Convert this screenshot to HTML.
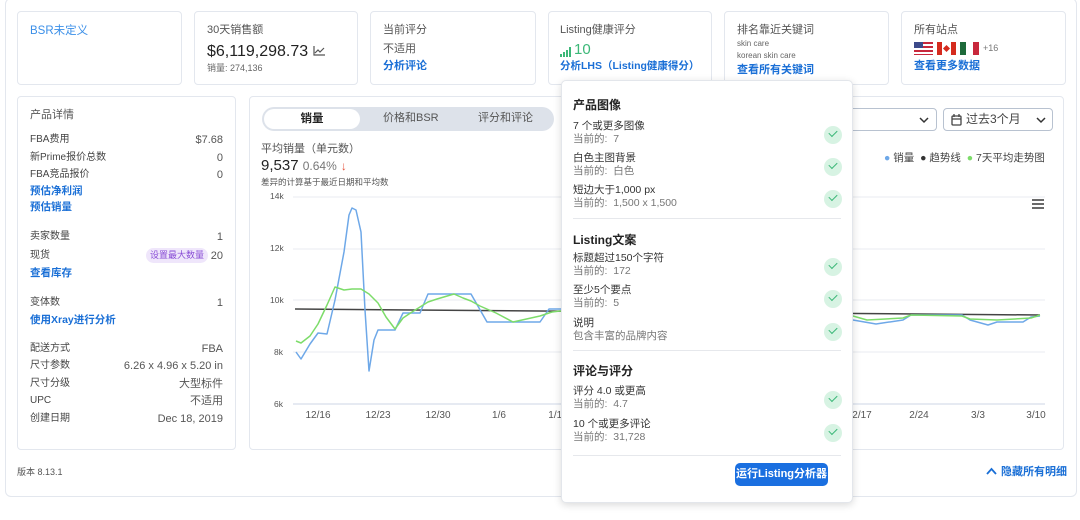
<!DOCTYPE html><html><head><meta charset="utf-8"><style>
*{box-sizing:border-box;margin:0;padding:0}
body{width:1080px;height:520px;background:#fff;font-family:"Liberation Sans","Noto Sans CJK SC",sans-serif;color:#333;position:relative;overflow:hidden;line-height:1.25}
.a{position:absolute;white-space:nowrap}
.card{position:absolute;border:1px solid #e3e7ee;border-radius:4px;background:#fff}
.lbl{font-size:11px;color:#555}
.link{color:#1a6fd6;font-weight:bold;font-size:11px}
.r{position:absolute;font-size:10px;color:#444;line-height:14px}
.v{position:absolute;right:12px;font-size:11px;color:#555;text-align:right;line-height:14px}
.ok{position:absolute;left:262px;width:18px;height:18px;border-radius:50%;background:#d7f3e3}
.ok:after{content:"";position:absolute;left:5px;top:4px;width:7px;height:4px;border-left:1.5px solid #3cb878;border-bottom:1.5px solid #3cb878;transform:rotate(-45deg)}
.ph{position:absolute;left:11px;font-size:12px;font-weight:bold;color:#222;line-height:15px}
.pi{position:absolute;left:11px;font-size:10.5px;color:#333;line-height:13px}
.pi span{color:#777;display:block}
.hr{position:absolute;left:11px;width:268px;height:1px;background:#e6e8ec}
</style></head><body>
<div class="card" style="left:5px;top:-2px;width:1072px;height:499px;border-radius:6px"></div>

<div class="card" style="left:17px;top:11px;width:165px;height:74px"><div class="a" style="left:12px;top:12px;font-size:11.5px;color:#3b8fe8">BSR未定义</div></div>
<div class="card" style="left:194px;top:11px;width:164px;height:74px">
<div class="a lbl" style="left:12px;top:12px">30天销售额</div>
<div class="a" style="left:12px;top:30px;font-size:16px;color:#222">$6,119,298.73</div>
<svg class="a" style="left:118px;top:34px" width="12" height="10"><path d="M1 0V9H12M2 7L5 4 7 6 11 2" stroke="#555" fill="none" stroke-width="1.2"/></svg>
<div class="a" style="left:12px;top:51px;font-size:9px;color:#666">销量: 274,136</div></div>
<div class="card" style="left:370px;top:11px;width:166px;height:74px">
<div class="a lbl" style="left:12px;top:12px">当前评分</div>
<div class="a lbl" style="left:12px;top:31px">不适用</div>
<div class="a link" style="left:12px;top:48px">分析评论</div></div>
<div class="card" style="left:548px;top:11px;width:164px;height:74px">
<div class="a lbl" style="left:11px;top:12px">Listing健康评分</div>
<svg class="a" style="left:11px;top:35px" width="12" height="10"><g fill="#3cb878"><rect x="0" y="7" width="2" height="3"/><rect x="3" y="5" width="2" height="5"/><rect x="6" y="3" width="2" height="7"/><rect x="9" y="0" width="2" height="10"/></g></svg>
<div class="a" style="left:25px;top:29px;font-size:15px;color:#3cb878">10</div>
<div class="a link" style="left:11px;top:48px;font-size:10.5px">分析LHS（Listing健康得分）</div></div>
<div class="card" style="left:724px;top:11px;width:165px;height:74px">
<div class="a lbl" style="left:12px;top:12px">排名靠近关键词</div>
<div class="a" style="left:12px;top:27px;font-size:8px;color:#666;line-height:10px">skin care</div>
<div class="a" style="left:12px;top:39px;font-size:8px;color:#666;line-height:10px">korean skin care</div>
<div class="a link" style="left:12px;top:52px">查看所有关键词</div></div>
<div class="card" style="left:901px;top:11px;width:165px;height:74px">
<div class="a lbl" style="left:12px;top:12px">所有站点</div>
<div class="a" style="left:12px;top:30px;width:19px;height:13px;background:repeating-linear-gradient(#c8283c 0 2px,#fff 2px 4px)"><div style="width:9px;height:6px;background:#3c4a8a"></div></div>
<div class="a" style="left:35px;top:30px;width:19px;height:13px;background:linear-gradient(90deg,#d52b1e 5px,#fff 5px 14px,#d52b1e 14px)"><div style="position:absolute;left:7px;top:4px;width:5px;height:5px;background:#d52b1e;transform:rotate(45deg)"></div></div>
<div class="a" style="left:58px;top:30px;width:19px;height:13px;background:linear-gradient(90deg,#1e6a3a 6px,#fff 6px 13px,#c8283c 13px)"></div>
<div class="a" style="left:81px;top:31px;font-size:9px;color:#777">+16</div>
<div class="a link" style="left:12px;top:48px">查看更多数据</div></div>

<div class="card" style="left:17px;top:96px;width:219px;height:354px">
<div class="a" style="left:12px;top:12px;font-size:11px;color:#555">产品详情</div>
<div class="r" style="left:12px;top:36px">FBA费用</div><div class="v" style="top:36px">$7.68</div>
<div class="r" style="left:12px;top:54px">新Prime报价总数</div><div class="v" style="top:54px">0</div>
<div class="r" style="left:12px;top:71px">FBA竞品报价</div><div class="v" style="top:71px">0</div>
<div class="a link" style="left:12px;top:88px;font-size:10.5px">预估净利润</div>
<div class="a link" style="left:12px;top:104px;font-size:10.5px">预估销量</div>
<div class="r" style="left:12px;top:133px">卖家数量</div><div class="v" style="top:133px">1</div>
<div class="r" style="left:12px;top:152px">现货</div>
<div class="a" style="left:128px;top:151px;padding:0 4px;border-radius:8px;background:#efe6fb;color:#8a4fd6;font-size:9px;line-height:15px">设置最大数量</div><div class="v" style="top:152px">20</div>
<div class="a link" style="left:12px;top:170px;font-size:10.5px">查看库存</div>
<div class="r" style="left:12px;top:199px">变体数</div><div class="v" style="top:199px">1</div>
<div class="a link" style="left:12px;top:217px;font-size:10.5px">使用Xray进行分析</div>
<div class="r" style="left:12px;top:245px">配送方式</div><div class="v" style="top:245px">FBA</div>
<div class="r" style="left:12px;top:262px">尺寸参数</div><div class="v" style="top:262px">6.26 x 4.96 x 5.20 in</div>
<div class="r" style="left:12px;top:280px">尺寸分级</div><div class="v" style="top:280px">大型标件</div>
<div class="r" style="left:12px;top:297px">UPC</div><div class="v" style="top:297px">不适用</div>
<div class="r" style="left:12px;top:315px">创建日期</div><div class="v" style="top:315px">Dec 18, 2019</div>
</div>

<div class="card" style="left:249px;top:96px;width:815px;height:354px"></div>
<div class="a" style="left:262px;top:107px;width:292px;height:24px;border-radius:12px;background:#dde2ea"></div>
<div class="a" style="left:264px;top:109px;width:96px;height:20px;border-radius:10px;background:#fff;text-align:center;font-size:11.5px;font-weight:bold;line-height:20px;color:#222">销量</div>
<div class="a" style="left:383px;top:112px;font-size:11px;color:#555">价格和BSR</div>
<div class="a" style="left:478px;top:112px;font-size:11px;color:#555">评分和评论</div>
<div class="a" style="left:261px;top:143px;font-size:11px;color:#555">平均销量（单元数）</div>
<div class="a" style="left:261px;top:157px;font-size:15px;color:#222">9,537 <span style="font-size:12px;color:#777">0.64%</span> <span style="font-size:12px;color:#e5533c;font-weight:bold">↓</span></div>
<div class="a" style="left:261px;top:177px;font-size:8.5px;color:#555">差异的计算基于最近日期和平均数</div>

<div class="a" style="left:830px;top:108px;width:107px;height:23px;border:1px solid #b8c2d0;border-radius:4px"><svg class="a" style="left:88px;top:8px" width="10" height="7"><path d="M1 1L5 5 9 1" stroke="#333" fill="none" stroke-width="1.5"/></svg></div>
<div class="a" style="left:943px;top:108px;width:110px;height:23px;border:1px solid #b8c2d0;border-radius:4px">
<svg class="a" style="left:7px;top:5px" width="11" height="12"><rect x="1" y="2" width="9" height="9" rx="1" stroke="#444" fill="none" stroke-width="1.3"/><path d="M1 5H10M3 0V3M8 0V3" stroke="#444" stroke-width="1.3"/></svg>
<div class="a" style="left:22px;top:3px;font-size:12px;color:#444">过去3个月</div>
<svg class="a" style="left:92px;top:8px" width="10" height="7"><path d="M1 1L5 5 9 1" stroke="#333" fill="none" stroke-width="1.5"/></svg></div>
<div class="a" style="left:884px;top:152px;font-size:10.5px;color:#444"><span style="color:#6ea8e8">●</span> 销量 &nbsp;<span style="color:#333">●</span> 趋势线 &nbsp;<span style="color:#7ddc6a">●</span> 7天平均走势图</div>
<svg class="a" style="left:1032px;top:199px" width="12" height="10"><path d="M0 1H12M0 5H12M0 9H12" stroke="#555" stroke-width="1.8"/></svg>

<svg class="a" style="left:0;top:0" width="1080" height="520">
<g stroke="#e8ebf0" stroke-width="1"><path d="M293 197H1045M293 249H1045M293 300H1045M293 352H1045"/></g>
<path d="M293 404H1045" stroke="#cdd6e6"/>
<g font-size="8.5" fill="#555" font-family="Liberation Sans"><text x="270" y="199">14k</text><text x="270" y="251">12k</text><text x="270" y="303">10k</text><text x="274" y="355">8k</text><text x="274" y="407">6k</text></g>
<g font-size="10" fill="#555" font-family="Liberation Sans" text-anchor="middle"><text x="318" y="418">12/16</text><text x="378" y="418">12/23</text><text x="438" y="418">12/30</text><text x="499" y="418">1/6</text><text x="558" y="418">1/13</text><text x="862" y="418">2/17</text><text x="919" y="418">2/24</text><text x="978" y="418">3/3</text><text x="1036" y="418">3/10</text></g>
<path d="M295 309L1040 315" stroke="#444" stroke-width="1.5"/>
<polyline fill="none" stroke="#6ea8e8" stroke-width="1.5" stroke-linejoin="round" points="296,352 301,359 310,344 318,333 327,334 335,300 344,252 349,215 352,208 356,210 361,232 365,310 369,371 374,340 378,330 386,330 395,330 403,313 412,313 420,313 428,294 437,294 471,294 487,322 496,322 540,322 549,309 560,309 853,320 876,324 903,320 911,315 962,315 970,320 988,325 997,322 1023,322 1031,317 1040,316"/>
<polyline fill="none" stroke="#7ddc6a" stroke-width="1.5" stroke-linejoin="round" points="296,341 301,343 310,336 318,324 327,305 335,287 344,290 352,289 361,289 369,294 378,303 386,317 395,329 403,318 412,312 420,307 428,302 437,299 454,294 463,298 471,301 480,306 496,313 513,322 522,320 531,318 540,316 552,312 560,311 853,316 867,320 903,318 911,315 962,316 970,319 997,320 1031,318 1040,315"/>
</svg>

<div class="a" style="left:17px;top:467px;font-size:9px;color:#555">版本 8.13.1</div>
<div class="a" style="left:986px;top:466px;font-size:11px;color:#1a6fd6;font-weight:bold"><svg width="11" height="8" style="margin-right:4px"><path d="M1 7L5.5 2 10 7" stroke="#1a6fd6" fill="none" stroke-width="1.8"/></svg>隐藏所有明细</div>

<div class="a" style="left:561px;top:80px;width:292px;height:423px;background:#fff;border:1px solid #e3e6eb;border-radius:5px;box-shadow:0 2px 8px rgba(0,0,0,.15)">
<div class="ph" style="top:17px">产品图像</div>
<div class="pi" style="top:39px">7 个或更多图像<span>当前的: &nbsp;7</span></div><div class="ok" style="top:45px"></div>
<div class="pi" style="top:71px">白色主图背景<span>当前的: &nbsp;白色</span></div><div class="ok" style="top:77px"></div>
<div class="pi" style="top:103px">短边大于1,000 px<span>当前的: &nbsp;1,500 x 1,500</span></div><div class="ok" style="top:109px"></div>
<div class="hr" style="top:137px"></div>
<div class="ph" style="top:152px">Listing文案</div>
<div class="pi" style="top:171px">标题超过150个字符<span>当前的: &nbsp;172</span></div><div class="ok" style="top:177px"></div>
<div class="pi" style="top:203px">至少5个要点<span>当前的: &nbsp;5</span></div><div class="ok" style="top:209px"></div>
<div class="pi" style="top:236px">说明<span>包含丰富的品牌内容</span></div><div class="ok" style="top:242px"></div>
<div class="hr" style="top:269px"></div>
<div class="ph" style="top:283px">评论与评分</div>
<div class="pi" style="top:304px">评分 4.0 或更高<span>当前的: &nbsp;4.7</span></div><div class="ok" style="top:310px"></div>
<div class="pi" style="top:337px">10 个或更多评论<span>当前的: &nbsp;31,728</span></div><div class="ok" style="top:343px"></div>
<div class="hr" style="top:374px"></div>
<div class="a" style="left:173px;top:382px;width:93px;height:23px;border-radius:5px;background:#1a6fe0;color:#fff;font-size:11px;font-weight:bold;text-align:center;line-height:23px">运行Listing分析器</div>
</div>
</body></html>
